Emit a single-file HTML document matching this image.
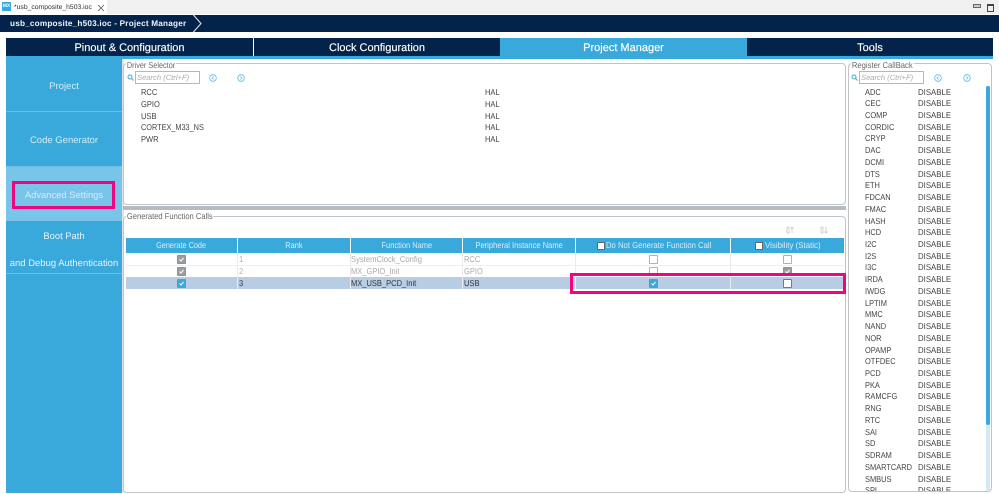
<!DOCTYPE html>
<html><head><meta charset="utf-8">
<style>
html,body{margin:0;padding:0;background:#fff;width:999px;height:494px;overflow:hidden}
body{position:relative;font-family:"Liberation Sans",sans-serif;font-size:8.5px;color:#444;text-rendering:geometricPrecision}
.a{position:absolute}
.t{position:absolute;white-space:nowrap;line-height:12px;margin-top:-.5px;transform:scaleX(.885);transform-origin:left center}
.tab{position:absolute;top:38px;height:18px;background:#03234b;color:#fff;font-size:11px;line-height:21px;text-align:center;-webkit-text-stroke:.15px #fff}
.side{position:absolute;left:6px;width:116px;text-align:center;color:#d4ecf8;white-space:nowrap;line-height:12px}
.panel{position:absolute;border:1px solid #bfc4c8;border-radius:4px;background:#fff;box-sizing:border-box}
.leg{position:absolute;background:#fff;color:#666;font-size:8.5px;line-height:10px;padding:0 1px;white-space:nowrap;transform:scaleX(.88);transform-origin:left center}
.search{position:absolute;width:65px;height:13px;border:1px solid #b4b8bc;box-sizing:border-box;color:#aaa;font-style:italic;font-size:7.6px;line-height:11px;padding-left:1px;white-space:nowrap;background:#fff}
.th{position:absolute;top:238px;height:15px;background:#39a9dc;color:#d8eef9;text-align:center;font-size:8.5px;line-height:15px;white-space:nowrap}
.th span{display:inline-block;transform:scaleX(.88)}
.th span.a{transform-origin:left center}
.cb{position:absolute;width:7px;height:7px;border:1px solid #aeb2b6;background:#fff;border-radius:1px}
.cb.g{background:#9a9ea3;border-color:#8e9297}
.cb.b{background:#39a9dc;border-color:#39a9dc}
.cb.w{border-color:#777}
.cb svg{position:absolute;left:0;top:0;width:7px;height:7px}
.hcb{position:absolute;width:6px;height:6px;border:1px solid #666;background:#fff;border-radius:1px}
.pink{position:absolute;border:3px solid #f0047f;box-sizing:border-box}
.t.g{color:#aaa}
.list .t{transform:scaleX(.875)}
.list .t:nth-child(even){transform:scaleX(.92)}
</style></head><body>

<div class="a" style="left:0;top:0;width:999px;height:14px;background:#f0f0f0"></div>
<div class="a" style="left:0;top:0;width:107px;height:14px;background:#fff"></div>
<div class="a" style="left:2px;top:2px;width:9px;height:9px;background:#39a9dc;color:#fff;font-size:5px;font-weight:bold;line-height:9px;text-align:center">MX</div>
<div class="t" style="left:14px;top:2px;font-size:6.8px;line-height:11px;color:#333;transform:none">*usb_composite_h503.ioc</div>
<svg class="a" style="left:97px;top:4px" width="8" height="8" viewBox="0 0 8 8"><path d="M1 1L7 7M7 1L1 7" stroke="#555" stroke-width="0.8" fill="none"/></svg>
<div class="a" style="left:973px;top:4px;width:6px;height:2px;border:1px solid #666;background:#ccc"></div>
<div class="a" style="left:987px;top:4px;width:5px;height:5px;border:1px solid #444;border-top-width:2px;background:#eee"></div>

<div class="a" style="left:0;top:15px;width:999px;height:17px;background:#03234b"></div>
<div class="t" style="left:10px;top:18px;color:#f2f5f8;font-weight:bold;font-size:8.2px;letter-spacing:.2px;transform:none">usb_composite_h503.ioc - Project Manager</div>
<svg class="a" style="left:192px;top:14px" width="14" height="19" viewBox="0 0 14 19"><path d="M1 0.5L9 9.500L1 18.500" stroke="#e8edf2" stroke-width="1" fill="#03234b"/></svg>

<div class="tab" style="left:6px;width:247px">Pinout &amp; Configuration</div>
<div class="tab" style="left:254px;width:246px">Clock Configuration</div>
<div class="tab" style="left:500px;width:247px;background:#39a9dc">Project Manager</div>
<div class="tab" style="left:747px;width:246px">Tools</div>
<div class="a" style="left:6px;top:56px;width:987px;height:3px;background:#39a9dc"></div>

<!-- sidebar -->
<div class="a" style="left:6px;top:59px;width:116px;height:434px;background:#39a9dc"></div>
<div class="a" style="left:6px;top:111px;width:116px;height:1px;background:#6cc0e6"></div>
<div class="a" style="left:6px;top:166px;width:116px;height:1px;background:#6cc0e6"></div>
<div class="a" style="left:6px;top:167px;width:116px;height:54px;background:#79c5ea"></div>
<div class="a" style="left:6px;top:273px;width:116px;height:1px;background:#6cc0e6"></div>
<div class="side" style="top:81px;font-size:9.6px">Project</div>
<div class="side" style="top:135px;font-size:9.5px">Code Generator</div>
<div class="side" style="top:189px;font-size:9.4px">Advanced Settings</div>
<div class="side" style="top:230px;font-size:9.4px;color:#e6f4fb">Boot Path</div>
<div class="side" style="top:257.500px;font-size:9.47px;color:#e6f4fb">and Debug Authentication</div>
<div class="pink" style="left:12px;top:181px;width:103px;height:28px"></div>
<div class="a" style="left:122px;top:59px;width:2px;height:434px;background:#e0e2e4"></div>

<!-- driver selector -->
<div class="panel" style="left:123px;top:63px;width:723px;height:142px"></div>
<div class="leg" style="left:126px;top:60px;transform:scaleX(.86)">Driver Selector</div>
<svg class="a" style="left:127px;top:74px" width="7" height="7" viewBox="0 0 7 7"><circle cx="3" cy="3" r="2" stroke="#39a9dc" fill="none"/><path d="M4.500 4.500L6.500 6.500" stroke="#39a9dc"/></svg>
<div class="search" style="left:135px;top:71px">Search (Ctrl+F)</div>
<svg class="a" style="left:209px;top:74px" width="8" height="8" viewBox="0 0 8 8"><circle cx="4" cy="4" r="3.300" stroke="#5cbbe6" fill="none" stroke-width=".8"/><path d="M4.700 2.500L3 4L4.700 5.500" stroke="#5cbbe6" fill="none" stroke-width=".8"/></svg>
<svg class="a" style="left:237px;top:74px" width="8" height="8" viewBox="0 0 8 8"><circle cx="4" cy="4" r="3.300" stroke="#5cbbe6" fill="none" stroke-width=".8"/><path d="M3.300 2.500L5 4L3.300 5.500" stroke="#5cbbe6" fill="none" stroke-width=".8"/></svg>
<div class="t" style="left:141px;top:86px">RCC</div><div class="t" style="left:485px;top:86px">HAL</div>
<div class="t" style="left:141px;top:98px">GPIO</div><div class="t" style="left:485px;top:98px">HAL</div>
<div class="t" style="left:141px;top:110px">USB</div><div class="t" style="left:485px;top:110px">HAL</div>
<div class="t" style="left:141px;top:121px;transform:scaleX(.86)">CORTEX_M33_NS</div><div class="t" style="left:485px;top:121px">HAL</div>
<div class="t" style="left:141px;top:133px">PWR</div><div class="t" style="left:485px;top:133px">HAL</div>

<!-- splitter -->
<div class="a" style="left:123px;top:206px;width:723px;height:4px;background:#b4bcc2"></div>

<!-- generated -->
<div class="panel" style="left:123px;top:216px;width:723px;height:277px"></div>
<div class="leg" style="left:126px;top:211px;transform:scaleX(.89)">Generated Function Calls</div>
<svg class="a" style="left:786px;top:226px" width="8" height="8" viewBox="0 0 8 8"><path d="M1 1H3V7H1ZM6 7V1M4.500 2.500L6 1L7.500 2.500" stroke="#c4c8cc" fill="none" stroke-width=".8"/></svg>
<svg class="a" style="left:820px;top:226px" width="8" height="8" viewBox="0 0 8 8"><path d="M1 1H3V7H1ZM6 1V7M4.500 5.500L6 7L7.500 5.500" stroke="#c4c8cc" fill="none" stroke-width=".8"/></svg>

<div class="th" style="left:126px;width:111px"><span style="transform:scaleX(.86)">Generate Code</span></div>
<div class="th" style="left:238px;width:112px"><span>Rank</span></div>
<div class="th" style="left:351px;width:111px"><span>Function Name</span></div>
<div class="th" style="left:463px;width:112px"><span style="transform:scaleX(.89)">Peripheral Instance Name</span></div>
<div class="th" style="left:576px;width:154px;text-align:left"><span class="a" style="left:30px;top:0;transform:scaleX(.906)">Do Not Generate Function Call</span></div>
<div class="th" style="left:731px;width:113px;text-align:left"><span class="a" style="left:34px;top:0;transform:scaleX(.93)">Visibility (Static)</span></div>
<div class="hcb" style="left:597px;top:242px"></div>
<div class="hcb" style="left:755px;top:242px"></div>

<div class="a" style="left:126px;top:265px;width:718px;height:1px;background:#eef0f1"></div>
<div class="a" style="left:126px;top:277px;width:718px;height:12px;background:#b8cde4"></div>
<div class="a" style="left:237px;top:253px;width:1px;height:36px;background:#e8ecef"></div>
<div class="a" style="left:350px;top:253px;width:1px;height:36px;background:#e8ecef"></div>
<div class="a" style="left:462px;top:253px;width:1px;height:36px;background:#e8ecef"></div>
<div class="a" style="left:575px;top:253px;width:1px;height:36px;background:#e8ecef"></div>
<div class="a" style="left:730px;top:253px;width:1px;height:36px;background:#e8ecef"></div>

<div class="t g" style="left:239px;top:253px">1</div><div class="t g" style="left:351px;top:253px;transform:scaleX(.9)">SystemClock_Config</div><div class="t g" style="left:464px;top:253px">RCC</div>
<div class="t g" style="left:239px;top:265px">2</div><div class="t g" style="left:351px;top:265px">MX_GPIO_Init</div><div class="t g" style="left:464px;top:265px">GPIO</div>
<div class="t" style="left:239px;top:277px;color:#333">3</div><div class="t" style="left:351px;top:277px;color:#333">MX_USB_PCD_Init</div><div class="t" style="left:464px;top:277px;color:#333">USB</div>

<div class="cb g" style="left:177px;top:255px"><svg viewBox="0 0 7 7"><path d="M1.500 3.500L3 5L5.500 2" stroke="#fff" fill="none"/></svg></div>
<div class="cb g" style="left:177px;top:267px"><svg viewBox="0 0 7 7"><path d="M1.500 3.500L3 5L5.500 2" stroke="#fff" fill="none"/></svg></div>
<div class="cb b" style="left:177px;top:279px"><svg viewBox="0 0 7 7"><path d="M1.500 3.500L3 5L5.500 2" stroke="#fff" fill="none"/></svg></div>
<div class="cb" style="left:649px;top:255px"></div>
<div class="cb" style="left:649px;top:267px"></div>
<div class="cb b" style="left:649px;top:279px"><svg viewBox="0 0 7 7"><path d="M1.500 3.500L3 5L5.500 2" stroke="#fff" fill="none"/></svg></div>
<div class="cb" style="left:783px;top:255px"></div>
<div class="cb g" style="left:783px;top:267px"><svg viewBox="0 0 7 7"><path d="M1.500 3.500L3 5L5.500 2" stroke="#fff" fill="none"/></svg></div>
<div class="cb w" style="left:783px;top:279px"></div>

<div class="pink" style="left:570px;top:273px;width:276px;height:21px"></div>

<!-- register callback -->
<div class="panel" style="left:848px;top:63px;width:144px;height:429px"></div>
<div class="leg" style="left:851px;top:60px;transform:scaleX(.9)">Register CallBack</div>
<svg class="a" style="left:851px;top:74px" width="7" height="7" viewBox="0 0 7 7"><circle cx="3" cy="3" r="2" stroke="#39a9dc" fill="none"/><path d="M4.500 4.500L6.500 6.500" stroke="#39a9dc"/></svg>
<div class="search" style="left:859px;top:71px">Search (Ctrl+F)</div>
<svg class="a" style="left:934px;top:74px" width="8" height="8" viewBox="0 0 8 8"><circle cx="4" cy="4" r="3.300" stroke="#5cbbe6" fill="none" stroke-width=".8"/><path d="M4.700 2.500L3 4L4.700 5.500" stroke="#5cbbe6" fill="none" stroke-width=".8"/></svg>
<svg class="a" style="left:963px;top:74px" width="8" height="8" viewBox="0 0 8 8"><circle cx="4" cy="4" r="3.300" stroke="#5cbbe6" fill="none" stroke-width=".8"/><path d="M3.300 2.500L5 4L3.300 5.500" stroke="#5cbbe6" fill="none" stroke-width=".8"/></svg>

<div class="a" style="left:986px;top:86px;width:4px;height:405px;background:#d4e8f6"></div>
<div class="a" style="left:986px;top:86px;width:4px;height:339px;background:#39a9dc;border-radius:2px"></div>

<div class="a list" style="left:849px;top:86px;width:136px;height:405px;overflow:hidden">
<div class="t" style="left:16px;top:0px">ADC</div><div class="t" style="left:69px;top:0px">DISABLE</div>
<div class="t" style="left:16px;top:11.730px">CEC</div><div class="t" style="left:69px;top:11.730px">DISABLE</div>
<div class="t" style="left:16px;top:23.450px">COMP</div><div class="t" style="left:69px;top:23.450px">DISABLE</div>
<div class="t" style="left:16px;top:35.180px">CORDIC</div><div class="t" style="left:69px;top:35.180px">DISABLE</div>
<div class="t" style="left:16px;top:46.900px">CRYP</div><div class="t" style="left:69px;top:46.900px">DISABLE</div>
<div class="t" style="left:16px;top:58.640px">DAC</div><div class="t" style="left:69px;top:58.640px">DISABLE</div>
<div class="t" style="left:16px;top:70.360px">DCMI</div><div class="t" style="left:69px;top:70.360px">DISABLE</div>
<div class="t" style="left:16px;top:82.090px">DTS</div><div class="t" style="left:69px;top:82.090px">DISABLE</div>
<div class="t" style="left:16px;top:93.820px">ETH</div><div class="t" style="left:69px;top:93.820px">DISABLE</div>
<div class="t" style="left:16px;top:105.550px">FDCAN</div><div class="t" style="left:69px;top:105.550px">DISABLE</div>
<div class="t" style="left:16px;top:117.270px">FMAC</div><div class="t" style="left:69px;top:117.270px">DISABLE</div>
<div class="t" style="left:16px;top:129px">HASH</div><div class="t" style="left:69px;top:129px">DISABLE</div>
<div class="t" style="left:16px;top:140.730px">HCD</div><div class="t" style="left:69px;top:140.730px">DISABLE</div>
<div class="t" style="left:16px;top:152.450px">I2C</div><div class="t" style="left:69px;top:152.450px">DISABLE</div>
<div class="t" style="left:16px;top:164.180px">I2S</div><div class="t" style="left:69px;top:164.180px">DISABLE</div>
<div class="t" style="left:16px;top:175.900px">I3C</div><div class="t" style="left:69px;top:175.900px">DISABLE</div>
<div class="t" style="left:16px;top:187.640px">IRDA</div><div class="t" style="left:69px;top:187.640px">DISABLE</div>
<div class="t" style="left:16px;top:199.360px">IWDG</div><div class="t" style="left:69px;top:199.360px">DISABLE</div>
<div class="t" style="left:16px;top:211.090px">LPTIM</div><div class="t" style="left:69px;top:211.090px">DISABLE</div>
<div class="t" style="left:16px;top:222.820px">MMC</div><div class="t" style="left:69px;top:222.820px">DISABLE</div>
<div class="t" style="left:16px;top:234.550px">NAND</div><div class="t" style="left:69px;top:234.550px">DISABLE</div>
<div class="t" style="left:16px;top:246.270px">NOR</div><div class="t" style="left:69px;top:246.270px">DISABLE</div>
<div class="t" style="left:16px;top:258px">OPAMP</div><div class="t" style="left:69px;top:258px">DISABLE</div>
<div class="t" style="left:16px;top:269.730px">OTFDEC</div><div class="t" style="left:69px;top:269.730px">DISABLE</div>
<div class="t" style="left:16px;top:281.450px">PCD</div><div class="t" style="left:69px;top:281.450px">DISABLE</div>
<div class="t" style="left:16px;top:293.180px">PKA</div><div class="t" style="left:69px;top:293.180px">DISABLE</div>
<div class="t" style="left:16px;top:304.900px">RAMCFG</div><div class="t" style="left:69px;top:304.900px">DISABLE</div>
<div class="t" style="left:16px;top:316.640px">RNG</div><div class="t" style="left:69px;top:316.640px">DISABLE</div>
<div class="t" style="left:16px;top:328.360px">RTC</div><div class="t" style="left:69px;top:328.360px">DISABLE</div>
<div class="t" style="left:16px;top:340.090px">SAI</div><div class="t" style="left:69px;top:340.090px">DISABLE</div>
<div class="t" style="left:16px;top:351.820px">SD</div><div class="t" style="left:69px;top:351.820px">DISABLE</div>
<div class="t" style="left:16px;top:363.550px">SDRAM</div><div class="t" style="left:69px;top:363.550px">DISABLE</div>
<div class="t" style="left:16px;top:375.270px">SMARTCARD</div><div class="t" style="left:69px;top:375.270px">DISABLE</div>
<div class="t" style="left:16px;top:387px">SMBUS</div><div class="t" style="left:69px;top:387px">DISABLE</div>
<div class="t" style="left:16px;top:398.730px">SPI</div><div class="t" style="left:69px;top:398.730px">DISABLE</div>
</div>

</body></html>
